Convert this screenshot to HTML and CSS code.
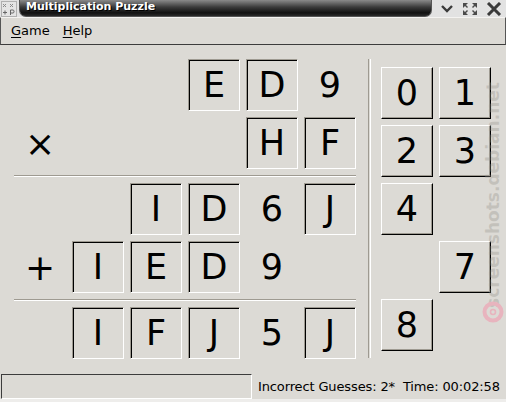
FILE: index.html
```html
<!DOCTYPE html>
<html lang="en">
<head>
  <meta charset="UTF-8">
  <title>Multiplication Puzzle</title>
  <link rel="stylesheet" href="styles.css">
</head>
<body>
  <div class="window">
    <div class="titlebar">
      <svg class="app-icon" width="16" height="16" viewBox="0 0 16 16">
        <rect x="0.5" y="0.5" width="15" height="15" fill="#e4e4e4" stroke="#b0b0b0"/>
        <path d="M2 3 L5 6 M5 3 L2 6" stroke="#8a8a8a" stroke-width="1"/>
        <path d="M9 3 L12 6 M12 3 L9 6" stroke="#8a8a8a" stroke-width="1"/>
        <path d="M2 11.5 H6 M4 9.5 V13.5" stroke="#666" stroke-width="1"/>
        <path d="M9.5 14 V9 H12 Q13 9 13 10.5 Q13 12 12 12 H9.5" fill="none" stroke="#666" stroke-width="1"/>
      </svg>
      <div class="title">Multiplication Puzzle</div>
      <div class="controls">
        <svg width="14" height="12" viewBox="0 0 14 12">
          <path d="M2 3 L7 8 L12 3" fill="none" stroke="#3a3a3a" stroke-width="2.4"/>
        </svg>
        <svg width="16" height="14" viewBox="0 0 16 14">
          <path d="M1 1 H6 L4 3 L6 5 L5 6 L3 4 L1 6 Z" fill="#4a4a4a"/>
          <path d="M15 1 H10 L12 3 L10 5 L11 6 L13 4 L15 6 Z" fill="#4a4a4a"/>
          <path d="M1 13 H6 L4 11 L6 9 L5 8 L3 10 L1 8 Z" fill="#4a4a4a"/>
          <path d="M15 13 H10 L12 11 L10 9 L11 8 L13 10 L15 8 Z" fill="#4a4a4a"/>
        </svg>
        <svg width="16" height="14" viewBox="0 0 16 14">
          <path d="M2 1 L14 13 M14 1 L2 13" stroke="#3a3a3a" stroke-width="3"/>
        </svg>
      </div>
    </div>

    <div class="menubar">
      <span class="menu-item"><u>G</u>ame</span>
      <span class="menu-item"><u>H</u>elp</span>
    </div>

    <div class="main">
      <div class="puzzle">
        <span></span><span></span><span></span>
        <span class="box">E</span><span class="box">D</span><span class="digit">9</span>

        <span class="op">×</span><span></span><span></span><span></span>
        <span class="box">H</span><span class="box">F</span>

        <div class="rule"></div>

        <span></span><span></span>
        <span class="box">I</span><span class="box">D</span><span class="digit">6</span><span class="box">J</span>

        <span class="op">+</span>
        <span class="box">I</span><span class="box">E</span><span class="box">D</span><span class="digit">9</span><span></span>

        <div class="rule"></div>

        <span></span>
        <span class="box">I</span><span class="box">F</span><span class="box">J</span><span class="digit">5</span><span class="box">J</span>
      </div>

      <div class="vsep"></div>

      <div class="digits">
        <span class="key">0</span><span class="key">1</span>
        <span class="key">2</span><span class="key">3</span>
        <span class="key">4</span><span></span>
        <span></span><span class="key">7</span>
        <span class="key">8</span><span></span>
      </div>
    </div>

    <div class="statusbar">
      <div class="status-field"></div>
      <div class="status-text">Incorrect Guesses: 2*&nbsp;&nbsp;Time: 00:02:58</div>
    </div>

    <div class="watermark">
      <span class="wm-text">screenshots.debian.net</span>
      <svg class="wm-logo" width="22" height="22" viewBox="0 0 22 22">
        <circle cx="11" cy="11" r="8.5" fill="none" stroke="#e8b4be" stroke-width="4"/>
        <circle cx="11" cy="11" r="2.5" fill="none" stroke="#e8b4be" stroke-width="1.6"/>
      </svg>
    </div>
  </div>
</body>
</html>
```

FILE: styles.css
```css
body {
  margin: 0;
  background-color: #dcdad5;
  font-family: 'DejaVu Sans', sans-serif;
}

.window {
  position: relative;
  width: 506px;
  height: 402px;
  overflow: hidden;
  background-color: #dcdad5;
}

/* title bar */
.titlebar {
  display: flex;
  align-items: center;
  height: 17px;
  background-color: #e2e2e2;
}

.app-icon {
  margin-left: 1px;
  flex: none;
}

.title {
  width: 413px;
  height: 17px;
  margin-left: 2px;
  padding-left: 6px;
  box-sizing: border-box;
  border-radius: 0 0 7px 7px;
  border: 1px solid #555;
  border-top: none;
  background: linear-gradient(#8a8a8a, #3a3a3a 45%, #111 80%, #2a2a2a);
  color: #fff;
  font-weight: bold;
  font-size: 11px;
  line-height: 14px;
  text-shadow: 1px 1px 0 #000;
}

.controls {
  display: flex;
  align-items: center;
  gap: 8px;
  margin-left: 8px;
}

/* menu bar */
.menubar {
  display: flex;
  gap: 13px;
  height: 26px;
  padding-left: 10px;
  border-top: 1px solid #f4f3f1;
  border-bottom: 1px solid #3c3c3c;
  border-left: 1px solid #555;
  border-right: 1px solid #555;
  font-size: 13px;
  line-height: 26px;
  color: #000;
}

.menu-item u {
  text-decoration-thickness: 1px;
  text-underline-offset: 2px;
}

/* puzzle area */
.main {
  display: flex;
  align-items: flex-start;
  height: 314px;
  padding: 14px 0 0 14px;
}

.puzzle {
  display: grid;
  grid-template-columns: repeat(6, 52px);
  grid-template-rows: 52px 52px 2px 52px 52px 2px 52px;
  gap: 6px;
}

.box,
.digit,
.op,
.key {
  display: flex;
  align-items: center;
  justify-content: center;
  font-size: 35px;
  color: #000;
}

.box {
  box-sizing: border-box;
  border-top: 1px solid #9e9a91;
  border-left: 1px solid #9e9a91;
  border-right: 1px solid #fff;
  border-bottom: 1px solid #fff;
  box-shadow: inset 1px 1px 0 #000;
}

.op {
  font-size: 36px;
}

.rule {
  grid-column: 1 / -1;
  border-top: 1px solid #9e9a91;
  border-bottom: 1px solid #fff;
}

.vsep {
  width: 1px;
  height: 299px;
  margin-left: 12px;
  border-left: 1px solid #9e9a91;
  border-right: 1px solid #fff;
}

.digits {
  display: grid;
  grid-template-columns: repeat(2, 52px);
  grid-auto-rows: 52px;
  gap: 6px;
  margin: 8px 0 0 10px;
}

.key {
  box-sizing: border-box;
  border-top: 1px solid #fff;
  border-left: 1px solid #fff;
  border-right: 1px solid #000;
  border-bottom: 1px solid #000;
  box-shadow: inset -1px -1px 0 #9e9a91;
}

/* status bar */
.statusbar {
  display: flex;
  align-items: center;
  height: 26px;
  border-bottom: 4px solid #eeedeb;
}

.status-field {
  width: 251px;
  height: 25px;
  margin-left: 1px;
  box-sizing: border-box;
  border-top: 1px solid #3c3c3c;
  border-left: 1px solid #3c3c3c;
  border-right: 1px solid #fff;
  border-bottom: 1px solid #fff;
}

.status-text {
  margin-left: 6px;
  font-size: 13px;
  letter-spacing: -0.13px;
  color: #000;
  white-space: nowrap;
}

/* watermark over the window */
.watermark {
  position: absolute;
  left: 481px;
  top: 86px;
  width: 24px;
  height: 240px;
}

.wm-text {
  position: absolute;
  left: 12px;
  top: 109px;
  transform: translate(-50%, -50%) rotate(-90deg);
  font-weight: bold;
  font-size: 17px;
  color: rgba(150, 146, 140, 0.35);
  white-space: nowrap;
}

.wm-logo {
  position: absolute;
  left: 1px;
  top: 215px;
}
```
